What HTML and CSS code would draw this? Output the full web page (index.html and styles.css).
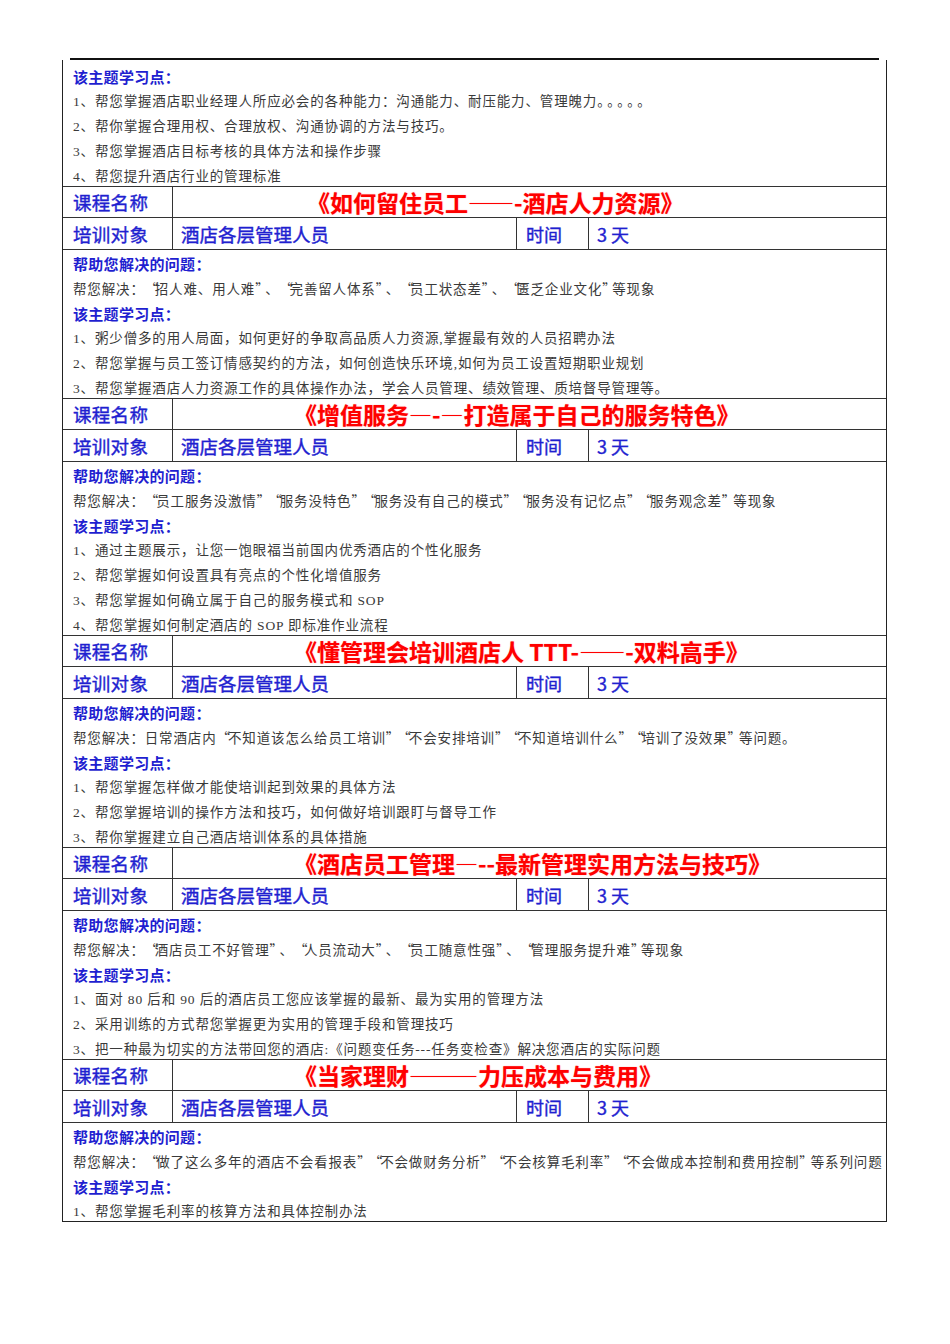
FILE: index.html
```html
<!DOCTYPE html>
<html lang="zh-CN">
<head>
<meta charset="utf-8">
<title>酒店管理课程</title>
<link rel="stylesheet" href="styles.css">
</head>
<body>
<div class="page">
  <div class="topline"></div>
  <div class="sheet">
    <section class="info first">
      <p class="h">该主题学习点：</p>
      <p>1、帮您掌握酒店职业经理人所应必会的各种能力：沟通能力、耐压能力、管理魄力<span class="dots">。。。。。</span></p>
      <p>2、帮你掌握合理用权、合理放权、沟通协调的方法与技巧。</p>
      <p>3、帮您掌握酒店目标考核的具体方法和操作步骤</p>
      <p>4、帮您提升酒店行业的管理标准</p>
    </section>

    <div class="row course"><div class="label">课程名称</div><div class="title t1">《如何留住员工——-酒店人力资源》</div></div>
    <div class="row target"><div class="label">培训对象</div><div class="val">酒店各层管理人员</div><div class="time">时间</div><div class="days">3 天</div></div>
    <section class="info">
      <p class="h">帮助您解决的问题：</p>
      <p>帮您解决：<span class="q n">“</span>招人难、用人难<span class="q n">”</span>、<span class="q n">“</span>完善留人体系<span class="q n">”</span>、<span class="q n">“</span>员工状态差<span class="q n">”</span>、<span class="q n">“</span>匮乏企业文化<span class="q n">”</span>等现象</p>
      <p class="h">该主题学习点：</p>
      <p>1、粥少僧多的用人局面，如何更好的争取高品质人力资源,掌握最有效的人员招聘办法</p>
      <p>2、帮您掌握与员工签订情感契约的方法，如何创造快乐环境,如何为员工设置短期职业规划</p>
      <p>3、帮您掌握酒店人力资源工作的具体操作办法，学会人员管理、绩效管理、质培督导管理等。</p>
    </section>

    <div class="row course"><div class="label">课程名称</div><div class="title">《增值服务—-—打造属于自己的服务特色》</div></div>
    <div class="row target"><div class="label">培训对象</div><div class="val">酒店各层管理人员</div><div class="time">时间</div><div class="days">3 天</div></div>
    <section class="info">
      <p class="h">帮助您解决的问题：</p>
      <p>帮您解决：<span class="q">“</span>员工服务没激情<span class="q">”“</span>服务没特色<span class="q">”“</span>服务没有自己的模式<span class="q">”“</span>服务没有记忆点<span class="q">”“</span>服务观念差<span class="q">”</span>等现象</p>
      <p class="h">该主题学习点：</p>
      <p>1、通过主题展示，让您一饱眼福当前国内优秀酒店的个性化服务</p>
      <p>2、帮您掌握如何设置具有亮点的个性化增值服务</p>
      <p>3、帮您掌握如何确立属于自己的服务模式和 SOP</p>
      <p>4、帮您掌握如何制定酒店的 SOP 即标准作业流程</p>
    </section>

    <div class="row course"><div class="label">课程名称</div><div class="title">《懂管理会培训酒店人 TTT-——-双料高手》</div></div>
    <div class="row target"><div class="label">培训对象</div><div class="val">酒店各层管理人员</div><div class="time">时间</div><div class="days">3 天</div></div>
    <section class="info">
      <p class="h">帮助您解决的问题：</p>
      <p>帮您解决：日常酒店内<span class="q">“</span>不知道该怎么给员工培训<span class="q">”“</span>不会安排培训<span class="q">”“</span>不知道培训什么<span class="q">”“</span>培训了没效果<span class="q">”</span>等问题。</p>
      <p class="h">该主题学习点：</p>
      <p>1、帮您掌握怎样做才能使培训起到效果的具体方法</p>
      <p>2、帮您掌握培训的操作方法和技巧，如何做好培训跟盯与督导工作</p>
      <p>3、帮你掌握建立自己酒店培训体系的具体措施</p>
    </section>

    <div class="row course"><div class="label">课程名称</div><div class="title">《酒店员工管理—--最新管理实用方法与技巧》</div></div>
    <div class="row target"><div class="label">培训对象</div><div class="val">酒店各层管理人员</div><div class="time">时间</div><div class="days">3 天</div></div>
    <section class="info">
      <p class="h">帮助您解决的问题：</p>
      <p>帮您解决：<span class="q n">“</span>酒店员工不好管理<span class="q n">”</span>、<span class="q n">“</span>人员流动大<span class="q n">”</span>、<span class="q n">“</span>员工随意性强<span class="q n">”</span>、<span class="q n">“</span>管理服务提升难<span class="q n">”</span>等现象</p>
      <p class="h">该主题学习点：</p>
      <p>1、面对 80 后和 90 后的酒店员工您应该掌握的最新、最为实用的管理方法</p>
      <p>2、采用训练的方式帮您掌握更为实用的管理手段和管理技巧</p>
      <p>3、把一种最为切实的方法带回您的酒店:《问题变任务---任务变检查》解决您酒店的实际问题</p>
    </section>

    <div class="row course"><div class="label">课程名称</div><div class="title">《当家理财———力压成本与费用》</div></div>
    <div class="row target"><div class="label">培训对象</div><div class="val">酒店各层管理人员</div><div class="time">时间</div><div class="days">3 天</div></div>
    <section class="info">
      <p class="h">帮助您解决的问题：</p>
      <p>帮您解决：<span class="q">“</span>做了这么多年的酒店不会看报表<span class="q">”“</span>不会做财务分析<span class="q">”“</span>不会核算毛利率<span class="q">”“</span>不会做成本控制和费用控制<span class="q">”</span>等系列问题</p>
      <p class="h">该主题学习点：</p>
      <p>1、帮您掌握毛利率的核算方法和具体控制办法</p>
    </section>
  </div>
</div>
</body>
</html>
```

FILE: styles.css
```css
html, body {
  margin: 0;
  padding: 0;
  background: #ffffff;
}

body {
  text-spacing-trim: space-all;
}

.page {
  padding: 58px 0 40px 62px;
}

.topline {
  width: 809px;
  height: 2px;
  margin-left: 8px;
  background: #111111;
}

.sheet {
  width: 823px;
  border: 1px solid #222222;
  border-top: none;
}

.info {
  padding: 1px 10px 0 10px;
  font-family: "Liberation Serif", "Noto Sans CJK SC", serif;
  font-size: 13.5px;
  line-height: 25px;
  letter-spacing: 0.85px;
  color: #3a3a3a;
}

.info.first {
  padding-top: 4px;
}

.row + .info {
  border-top: 1px solid #333333;
}

.info p {
  margin: 0;
  height: 25px;
  white-space: nowrap;
}

.info p:last-child {
  margin-bottom: -3px;
}

.info .h {
  font-family: "Noto Sans CJK SC", sans-serif;
  font-weight: 700;
  font-size: 15px;
  letter-spacing: 0.3px;
  color: #1f1fd0;
}

.q {
  font-family: "Noto Sans CJK SC", sans-serif;
  font-feature-settings: "fwid" 1;
  letter-spacing: -2px;
}

.q.n {
  letter-spacing: -3.5px;
}

.dots {
  letter-spacing: -3.5px;
}

.row {
  display: flex;
  border-top: 1px solid #333333;
}

.course {
  height: 30px;
}

.target {
  height: 31px;
}

.label,
.val,
.time,
.days {
  display: flex;
  align-items: center;
  font-family: "Noto Sans CJK SC", sans-serif;
  font-size: 18.5px;
  color: #1f1fd0;
  -webkit-text-stroke: 0.4px #1f1fd0;
  box-sizing: border-box;
}

.label {
  width: 110px;
  padding-left: 10px;
  letter-spacing: 0.3px;
  border-right: 1px solid #333333;
}

.val {
  width: 344px;
  padding-left: 8px;
  border-right: 1px solid #333333;
}

.time {
  width: 72px;
  padding-left: 9px;
  border-right: 1px solid #333333;
  font-size: 18px;
}

.days {
  flex: 1;
  padding-left: 8px;
  font-size: 18px;
}

.title {
  flex: 1;
  display: flex;
  align-items: center;
  padding-left: 121px;
  font-family: "Noto Sans CJK SC", sans-serif;
  font-weight: 700;
  font-size: 23px;
  letter-spacing: 0;
  color: #ff0000;
  white-space: nowrap;
  text-shadow: 0 0 1px rgba(255, 40, 40, 0.6);
}

.title.t1 {
  padding-left: 134px;
}
```
